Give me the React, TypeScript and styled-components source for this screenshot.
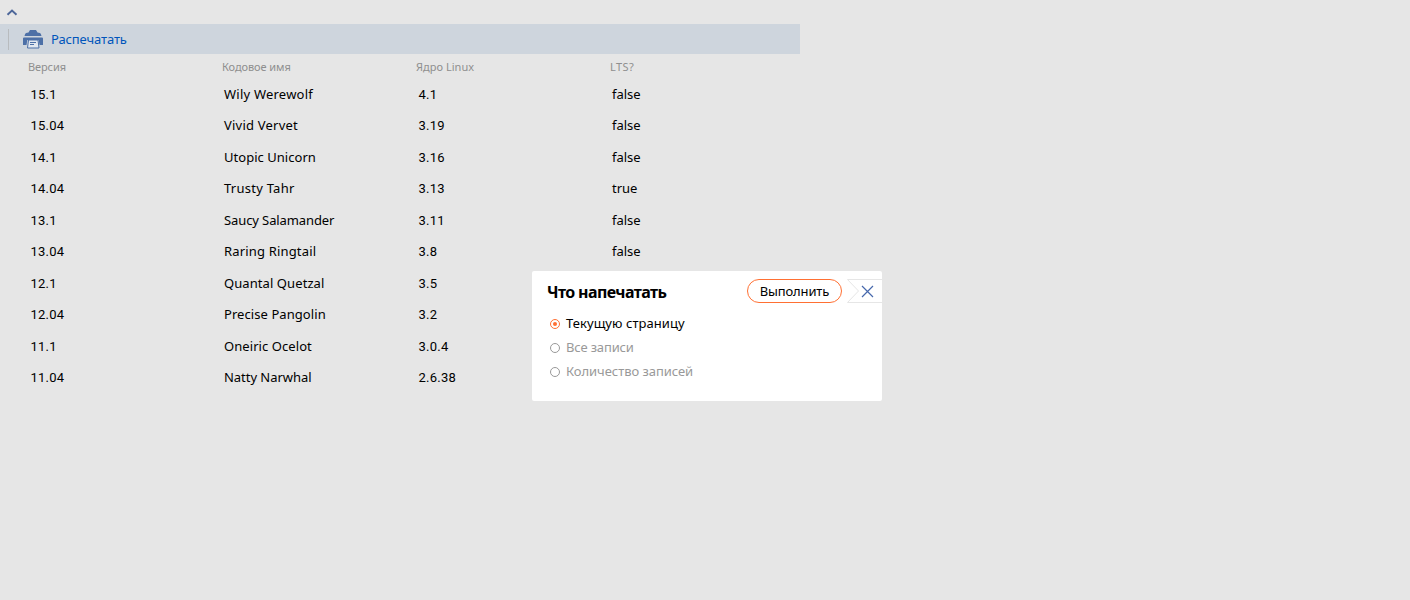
import React, { useState } from "react";
import styled, { createGlobalStyle } from "styled-components";

const GlobalStyle = createGlobalStyle`
  * { box-sizing: border-box; }
  body {
    margin: 0;
    background: #e6e6e6;
    font-family: "Noto Sans", "Open Sans", sans-serif;
    font-size: 13px;
    color: #000;
  }
`;

const Page = styled.div`
  position: relative;
  width: 100%;
  height: 600px;
  overflow: hidden;
`;

const Panel = styled.div`
  width: 800px;
`;

const CollapseBar = styled.div`
  height: 24px;
  padding: 9px 0 0 6px;
  svg { display: block; }
`;

const Toolbar = styled.div`
  height: 30px;
  display: flex;
  align-items: center;
  background: #ced5dd;
  padding-left: 8px;
`;

const Separator = styled.span`
  width: 1px;
  height: 21px;
  margin-right: 14px;
  background: #b8bbbe;
`;

const PrintButton = styled.button`
  display: flex;
  align-items: center;
  gap: 8px;
  border: 0;
  padding: 0;
  background: none;
  font: inherit;
  line-height: 20px;
  color: #0055bb;
`;

const Label = styled.span<{ $spacing?: number }>`
  white-space: nowrap;
  letter-spacing: ${(p) => p.$spacing ?? 0}px;
`;

const Columns = styled.div`
  display: grid;
  grid-template-columns: 194px 194px 194px 1fr;
`;

const HeaderRow = styled(Columns)`
  height: 24.5px;
  padding-left: 28px;
  font-size: 11px;
  line-height: 26px;
  color: #8f8f8f;
`;

const Row = styled(Columns)`
  height: 31.5px;
  padding-left: 30px;
  line-height: 31px;
`;

const NumberCell = styled.span`
  font-family: Roboto, sans-serif;
  font-size: 13px;
  letter-spacing: 0.25px;
  padding-left: 0.5px;
`;

const Dialog = styled.section`
  position: absolute;
  left: 532px;
  top: 271px;
  width: 350px;
  height: 130px;
  border-radius: 2px;
  background: #fff;
`;

const DialogHeader = styled.header`
  display: flex;
  padding: 8px 0 0 15px;
  height: 40px;
`;

const Title = styled.h2`
  flex: 1;
  margin: 0;
  font-size: 16px;
  line-height: 26px;
  font-weight: 700;
`;

const RunButton = styled.button`
  width: 95px;
  height: 24px;
  border: 1px solid #ff7033;
  border-radius: 12px;
  background: #fff;
  padding: 0;
  font: inherit;
  line-height: 22px;
  color: #000;
`;

const CloseButton = styled.button`
  width: 36px;
  height: 24px;
  margin-left: 4px;
  border: 0;
  padding: 0;
  background: none;
  svg { display: block; }
`;

const Option = styled.div<{ $selected: boolean }>`
  display: flex;
  align-items: center;
  gap: 6px;
  height: 24px;
  padding-left: 18px;
  color: ${(p) => (p.$selected ? "#000" : "#999")};
`;

const Radio = styled.span<{ $selected: boolean }>`
  display: grid;
  place-items: center;
  width: 10px;
  height: 10px;
  margin-top: 2px;
  border: 1px solid ${(p) => (p.$selected ? "#ff7033" : "#999")};
  border-radius: 50%;
  &::after {
    content: "";
    width: 4px;
    height: 4px;
    border-radius: 50%;
    background: ${(p) => (p.$selected ? "#ff7033" : "transparent")};
  }
`;

const PrinterIcon = () => (
  <svg width="20" height="20" viewBox="0 0 20 20" fill="none">
    <path d="M5.500 3.500L7 1h6l1.500 2.500L17 4q1 .5 1.500 3h-17Q2 4.500 3 4z" fill="#4d70a7" />
    <path d="M1 8.500h18q1 0 1 1V16h-3.500L15.500 10h-11L3.500 16H0V9.500q0-1 1-1z" fill="#4d70a7" />
    <path d="M5.500 11h9.500l1 8H4.500z" fill="#e2e8f0" stroke="#4d70a7" />
    <path d="M3 10.500h14" stroke="#4d70a7" />
    <path d="M7 13.500h6M7 15.500h4" stroke="#4d70a7" />
  </svg>
);

const headers: [string, number][] = [
  ["Версия", -0.1],
  ["Кодовое имя", -0.08],
  ["Ядро Linux", 0.03],
  ["LTS?", 0.4],
];

const releases: [string, string, number, string, string][] = [
  ["15.1", "Wily Werewolf", 0.22, "4.1", "false"],
  ["15.04", "Vivid Vervet", 0.22, "3.19", "false"],
  ["14.1", "Utopic Unicorn", 0.03, "3.16", "false"],
  ["14.04", "Trusty Tahr", 0.25, "3.13", "true"],
  ["13.1", "Saucy Salamander", -0.1, "3.11", "false"],
  ["13.04", "Raring Ringtail", 0.17, "3.8", "false"],
  ["12.1", "Quantal Quetzal", 0.08, "3.5", "false"],
  ["12.04", "Precise Pangolin", 0.07, "3.2", "false"],
  ["11.1", "Oneiric Ocelot", 0.07, "3.0.4", "false"],
  ["11.04", "Natty Narwhal", -0.04, "2.6.38", "false"],
];

const options: [string, number][] = [
  ["Текущую страницу", 0.06],
  ["Все записи", -0.15],
  ["Количество записей", -0.05],
];

export default function App() {
  const [selected, setSelected] = useState(0);
  return (
    <>
      <GlobalStyle />
      <Page>
        <Panel>
          <CollapseBar>
            <svg width="12" height="7" viewBox="0 0 12 7" fill="none">
              <path d="M1.500 5.800L6 1.500l4.500 4.300" stroke="#4d6699" strokeWidth="1.900" />
            </svg>
          </CollapseBar>
          <Toolbar>
            <Separator />
            <PrintButton>
              <PrinterIcon />
              <Label $spacing={-0.12}>Распечатать</Label>
            </PrintButton>
          </Toolbar>
          <HeaderRow>
            {headers.map(([text, spacing]) => (
              <Label key={text} $spacing={spacing}>{text}</Label>
            ))}
          </HeaderRow>
          {releases.map(([version, name, spacing, kernel, lts], i) => (
            <Row key={version}>
              <NumberCell>{version}</NumberCell>
              <Label $spacing={spacing}>{name}</Label>
              <NumberCell>{kernel}</NumberCell>
              {i < 6 && <Label>{lts}</Label>}
            </Row>
          ))}
        </Panel>
        <Dialog>
          <DialogHeader>
            <Title><Label $spacing={-0.6}>Что напечатать</Label></Title>
            <RunButton><Label $spacing={-0.15}>Выполнить</Label></RunButton>
            <CloseButton aria-label="Закрыть">
              <svg width="36" height="24" viewBox="0 0 36 24" fill="none">
                <path d="M36 .5H1.500L12.500 12 1.500 23.500H36" stroke="#e6e6e6" />
                <path d="M16 7l11 11M27 7l-11 11" stroke="#4668ac" strokeWidth="1.200" />
              </svg>
            </CloseButton>
          </DialogHeader>
          {options.map(([text, spacing], i) => (
            <Option key={text} $selected={i === selected} onClick={() => setSelected(i)}>
              <Radio $selected={i === selected} />
              <Label $spacing={spacing}>{text}</Label>
            </Option>
          ))}
        </Dialog>
      </Page>
    </>
  );
}
